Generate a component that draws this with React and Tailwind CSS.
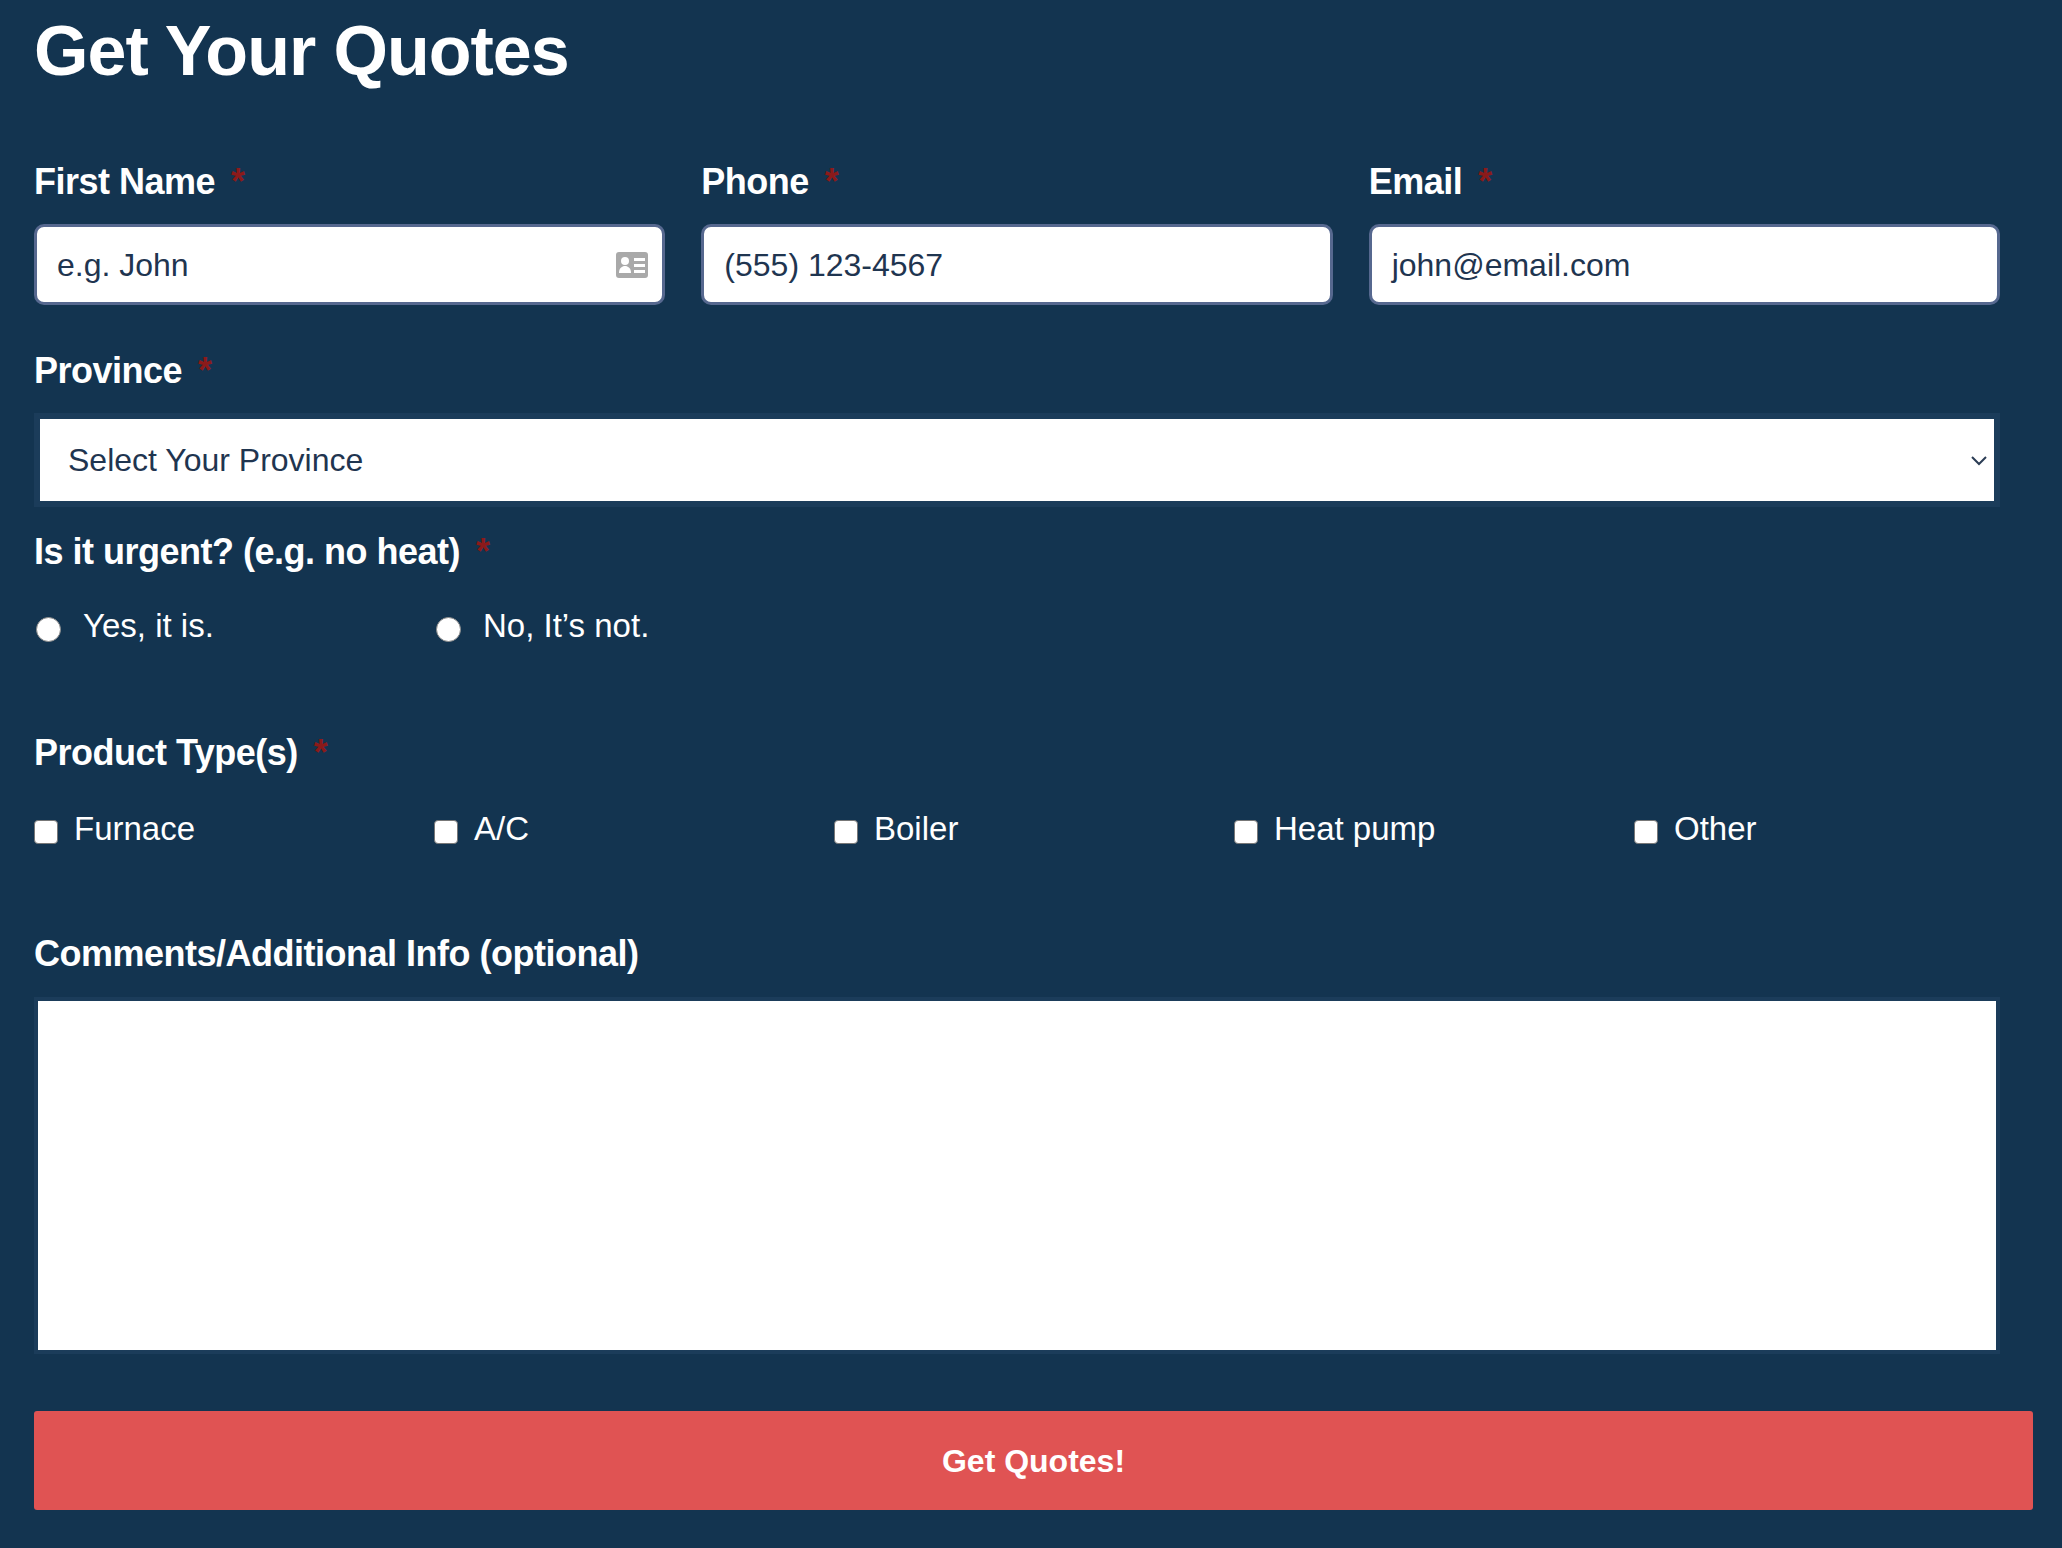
import React from 'react';

const font = { fontFamily: '"Liberation Sans", Arial, sans-serif' };

function Label({ children, required = true }) {
  return (
    <div className="text-[36px] font-bold text-white leading-none tracking-[-0.5px]">
      {children}
      {required && <span className="text-[#8b1a1a] ml-4">*</span>}
    </div>
  );
}

function TextInput({ placeholder, icon }) {
  return (
    <div className="relative h-[81px] rounded-[10px] border-[3px] border-[#56688f] bg-white flex items-center px-[20px]">
      <span className="text-[32px] text-[#1f3550]">{placeholder}</span>
      {icon && (
        <svg className="absolute right-[14px] top-1/2 -translate-y-1/2" width="32" height="26" viewBox="0 0 32 26">
          <rect x="0" y="0" width="32" height="26" rx="3" fill="#a9a9a9" />
          <circle cx="9" cy="9" r="4" fill="#fff" />
          <path d="M3 21c0-5 3-7 6-7s6 2 6 7z" fill="#fff" />
          <rect x="18" y="6" width="11" height="3" fill="#fff" />
          <rect x="18" y="12" width="11" height="3" fill="#fff" />
          <rect x="18" y="18" width="11" height="3" fill="#fff" />
        </svg>
      )}
    </div>
  );
}

function Radio({ label }) {
  return (
    <div className="flex items-center w-[400px]">
      <span className="w-[25px] h-[25px] rounded-full bg-white border border-[#8a8a8a] mt-[8px]" />
      <span className="ml-[22px] text-[33px] text-white">{label}</span>
    </div>
  );
}

function Check({ label }) {
  return (
    <div className="flex items-center w-[400px]">
      <span className="w-[24px] h-[24px] rounded-[4px] bg-white border border-[#777] mt-[8px]" />
      <span className="ml-[16px] text-[33px] text-white">{label}</span>
    </div>
  );
}

export default function App() {
  return (
    <div style={font} className="min-h-[1548px] w-[2062px] bg-[#133450] pl-[34px] pt-[16px]">
      <h1 className="text-[70px] font-bold text-white leading-none tracking-[-1px]">Get Your Quotes</h1>

      <div className="w-[1966px] mt-[78px] grid grid-cols-3 gap-x-[36px]">
        <div>
          <Label>First Name</Label>
          <div className="mt-[24px]"><TextInput placeholder="e.g. John" icon /></div>
        </div>
        <div>
          <Label>Phone</Label>
          <div className="mt-[24px]"><TextInput placeholder="(555) 123-4567" /></div>
        </div>
        <div>
          <Label>Email</Label>
          <div className="mt-[24px]"><TextInput placeholder="john@email.com" /></div>
        </div>
      </div>

      <div className="w-[1966px] mt-[48px]">
        <Label>Province</Label>
        <div className="mt-[24px] border-[6px] border-[#1b3c5a] bg-[#1b3c5a]">
          <div className="h-[82px] bg-white flex items-center justify-between pl-[28px] pr-[6px]">
            <span className="text-[32px] text-[#1f3550]">Select Your Province</span>
            <svg width="18" height="12" viewBox="0 0 18 12">
              <path d="M2 3l7 7 7-7" stroke="#2b3d55" strokeWidth="2" fill="none" />
            </svg>
          </div>
        </div>
      </div>

      <div className="mt-[27px]">
        <Label>Is it urgent? (e.g. no heat)</Label>
        <div className="mt-[31px] flex pl-[2px]">
          <Radio label="Yes, it is." />
          <Radio label="No, It’s not." />
        </div>
      </div>

      <div className="mt-[84px]">
        <Label>Product Type(s)</Label>
        <div className="mt-[33px] flex">
          <Check label="Furnace" />
          <Check label="A/C" />
          <Check label="Boiler" />
          <Check label="Heat pump" />
          <Check label="Other" />
        </div>
      </div>

      <div className="w-[1966px] mt-[83px]">
        <Label required={false}>Comments/Additional Info (optional)</Label>
        <div className="mt-[25px] border-[4px] border-[#1b3c5a]">
          <textarea className="block w-full h-[349px] bg-white resize-none outline-none" />
        </div>
      </div>

      <button className="mt-[57px] w-[1999px] h-[99px] rounded-[3px] bg-[#e05353] text-white text-[32px] font-bold">
        Get Quotes!
      </button>
    </div>
  );
}
